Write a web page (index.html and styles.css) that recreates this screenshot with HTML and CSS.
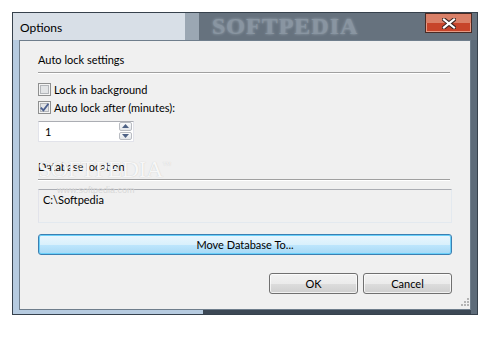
FILE: index.html
```html
<!DOCTYPE html>
<html lang="en">
<head>
    <meta charset="UTF-8">
    <title>Options</title>
    <link rel="stylesheet" href="styles.css">
</head>
<body>
    <div class="dlg-frame">
        <div class="dlg-caption">
            <span class="dlg-title">Options</span>
            <span class="glass-mark">SOFTPEDIA</span>
            <div class="dlg-close">
                <svg width="14" height="11" viewBox="0 0 14 11">
                    <path d="M2 1.5 L12 9.5 M12 1.5 L2 9.5" stroke="#3a2420" stroke-width="4.2" stroke-linecap="square"/>
                    <path d="M2 1.5 L12 9.5 M12 1.5 L2 9.5" stroke="#ffffff" stroke-width="2.2" stroke-linecap="square"/>
                </svg>
            </div>
        </div>

        <div class="client">
            <div class="watermark">SOFTPEDIA<sup>™</sup></div>
            <div class="watermark-url">www.softpedia.com</div>

            <div class="group-label">Auto lock settings</div>
            <div class="separator"></div>

            <div class="check-row">
                <span class="checkbox"><span class="check-inner"></span></span>
                <span>Lock in background</span>
            </div>
            <div class="check-row">
                <span class="checkbox">
                    <span class="check-inner">
                        <svg width="9" height="9" viewBox="0 0 9 9">
                            <path d="M0.8 4.6 L3.4 7.4 L8.4 0.8" fill="none" stroke="#4b5f8f" stroke-width="1.8"/>
                        </svg>
                    </span>
                </span>
                <span>Auto lock after (minutes):</span>
            </div>

            <div class="spin">
                <span class="spin-value">1</span>
                <div class="spin-buttons">
                    <span class="spin-btn">
                        <svg width="7" height="4" viewBox="0 0 7 4"><path d="M0 4 L3.5 0 L7 4 Z" fill="#4d6185"/></svg>
                    </span>
                    <span class="spin-btn">
                        <svg width="7" height="4" viewBox="0 0 7 4"><path d="M0 0 L3.5 4 L7 0 Z" fill="#4d6185"/></svg>
                    </span>
                </div>
            </div>

            <div class="group-label db-label">Database location</div>
            <div class="separator"></div>

            <div class="path-box">C:\Softpedia</div>

            <div class="wide-btn">Move Database To...</div>

            <div class="actions">
                <div class="btn">OK</div>
                <div class="btn">Cancel</div>
            </div>

            <svg class="grip" width="8" height="8" viewBox="0 0 8 8">
                <rect x="6" y="0" width="2" height="2" fill="#b4b4b4"/>
                <rect x="3" y="3" width="2" height="2" fill="#b4b4b4"/>
                <rect x="6" y="3" width="2" height="2" fill="#b4b4b4"/>
                <rect x="0" y="6" width="2" height="2" fill="#b4b4b4"/>
                <rect x="3" y="6" width="2" height="2" fill="#b4b4b4"/>
                <rect x="6" y="6" width="2" height="2" fill="#b4b4b4"/>
            </svg>
        </div>
    </div>
</body>
</html>
```

FILE: styles.css
```css
* {
    box-sizing: border-box;
}

body {
    margin: 0;
    padding: 0;
    background: #ffffff;
    font-family: Lato, "Open Sans", sans-serif;
    font-size: 11px;
    color: #000000;
}

/* Aero window frame */
.dlg-frame {
    position: relative;
    margin: 12px 0 0 12px;
    width: 466px;
    height: 303px;
    padding: 0 6px 4px 6px;
    border: 1px solid #36414c;
    background: #b6cbe0;
    display: flex;
    flex-direction: column;
}

/* darker glass on the right edge and the bottom middle */
.dlg-frame::after {
    content: "";
    position: absolute;
    right: 0;
    top: 27px;
    bottom: 0;
    width: 6px;
    background: #5d6b79;
}

.dlg-frame::before {
    content: "";
    position: absolute;
    left: 190px;
    right: 0;
    bottom: 0;
    height: 4px;
    background: #3c4855;
}

.dlg-caption {
    position: relative;
    height: 27px;
    margin: 0 -6px;
    padding-left: 7px;
    background: #d8dfe7;
    display: flex;
    align-items: flex-start;
}

.dlg-title {
    position: relative;
    line-height: 27px;
    padding-top: 1px;
    font-size: 12px;
    color: #000000;
}

/* darker blurred glass on the right of the caption */
.glass-mark {
    position: absolute;
    left: 172px;
    right: 0;
    top: 0;
    bottom: 0;
    padding-left: 13px;
    border-left: 14px solid #9ba7b3;
    background: #66727e;
    font-family: "Liberation Serif", serif;
    font-weight: bold;
    font-size: 24px;
    letter-spacing: 1px;
    line-height: 27px;
    color: #8995a1;
    text-shadow: 0 0 3px #9ca8b4;
}

.dlg-close {
    position: absolute;
    right: 5px;
    top: 0;
    width: 47px;
    height: 20px;
    border: 1px solid #4a2a24;
    background: #c7442a;
    box-shadow: inset 0 9px 0 #da8068, inset 0 0 0 1px #e59a84;
    display: flex;
    align-items: center;
    justify-content: center;
}

/* Client area */
.client {
    position: relative;
    flex: 1;
    border: 1px solid #6f7e8c;
    background: #f0f0f0;
    padding: 11px 18px 0 18px;
}

.group-label {
    line-height: 15px;
    height: 15px;
}

.db-label {
    margin-top: 17px;
}

.separator {
    margin: 5px 2px 0 0;
    height: 2px;
    border-top: 1px solid #a0a0a0;
    border-bottom: 1px solid #ffffff;
}

.check-row {
    display: flex;
    align-items: center;
    height: 16px;
    margin-top: 2px;
}

.separator + .check-row {
    margin-top: 7px;
}

.checkbox {
    width: 13px;
    height: 13px;
    margin-right: 3px;
    border: 1px solid #8e8f8f;
    background: #f4f4f4;
    padding: 1px;
}

.check-inner {
    display: block;
    width: 9px;
    height: 9px;
    border: 1px solid #b3b6ba;
    background: #e2e4e6;
    position: relative;
}

.check-inner svg {
    position: absolute;
    left: -1px;
    top: -1px;
}

.spin {
    margin-top: 6px;
    width: 96px;
    height: 21px;
    border: 1px solid #e2e3ea;
    border-top-color: #abadb3;
    background: #ffffff;
    display: flex;
    justify-content: space-between;
}

.spin-value {
    padding-left: 6px;
    line-height: 19px;
}

.spin-buttons {
    width: 14px;
    display: flex;
    flex-direction: column;
    gap: 1px;
    padding: 0 1px 1px 0;
}

.spin-btn {
    flex: 1;
    border: 1px solid #b9bcc2;
    border-radius: 2px;
    background: linear-gradient(#fafbfc, #e3e6ea);
    display: flex;
    align-items: center;
    justify-content: center;
}

.path-box {
    margin-top: 8px;
    height: 34px;
    border: 1px solid #e3e9ef;
    border-top-color: #abadb3;
    border-left-color: #e2e3ea;
    padding: 2px 0 0 4px;
    line-height: 15px;
}

.wide-btn {
    margin-top: 11px;
    height: 21px;
    line-height: 19px;
    text-align: center;
    border: 1px solid #3c7fb1;
    border-radius: 3px;
    background: linear-gradient(#eaf6fd 0%, #d9f0fc 50%, #bee6fd 50%, #a7d9f5 100%);
    box-shadow: inset 0 0 0 1px #6ad0fa;
}

.actions {
    margin-top: 18px;
    display: flex;
    justify-content: flex-end;
    gap: 5px;
}

.btn {
    width: 89px;
    height: 21px;
    line-height: 19px;
    text-align: center;
    border: 1px solid #707070;
    border-radius: 3px;
    background: linear-gradient(#f2f2f2 0%, #ebebeb 50%, #dddddd 50%, #cfcfcf 100%);
    box-shadow: inset 0 0 0 1px rgba(255, 255, 255, 0.7);
}

.grip {
    position: absolute;
    right: 1px;
    bottom: 3px;
}

/* faint site watermark over the dialog */
.watermark {
    position: absolute;
    left: 18px;
    top: 112px;
    font-family: "Liberation Serif", serif;
    font-size: 24px;
    letter-spacing: -0.5px;
    line-height: 24px;
    color: #f7f7f7;
    text-shadow: 0 0 1px #c4c4c4;
}

.watermark sup {
    font-size: 9px;
}

.watermark-url {
    position: absolute;
    left: 37px;
    top: 144px;
    font-family: "Liberation Sans", sans-serif;
    font-size: 9px;
    color: #d8d8d8;
}
```
